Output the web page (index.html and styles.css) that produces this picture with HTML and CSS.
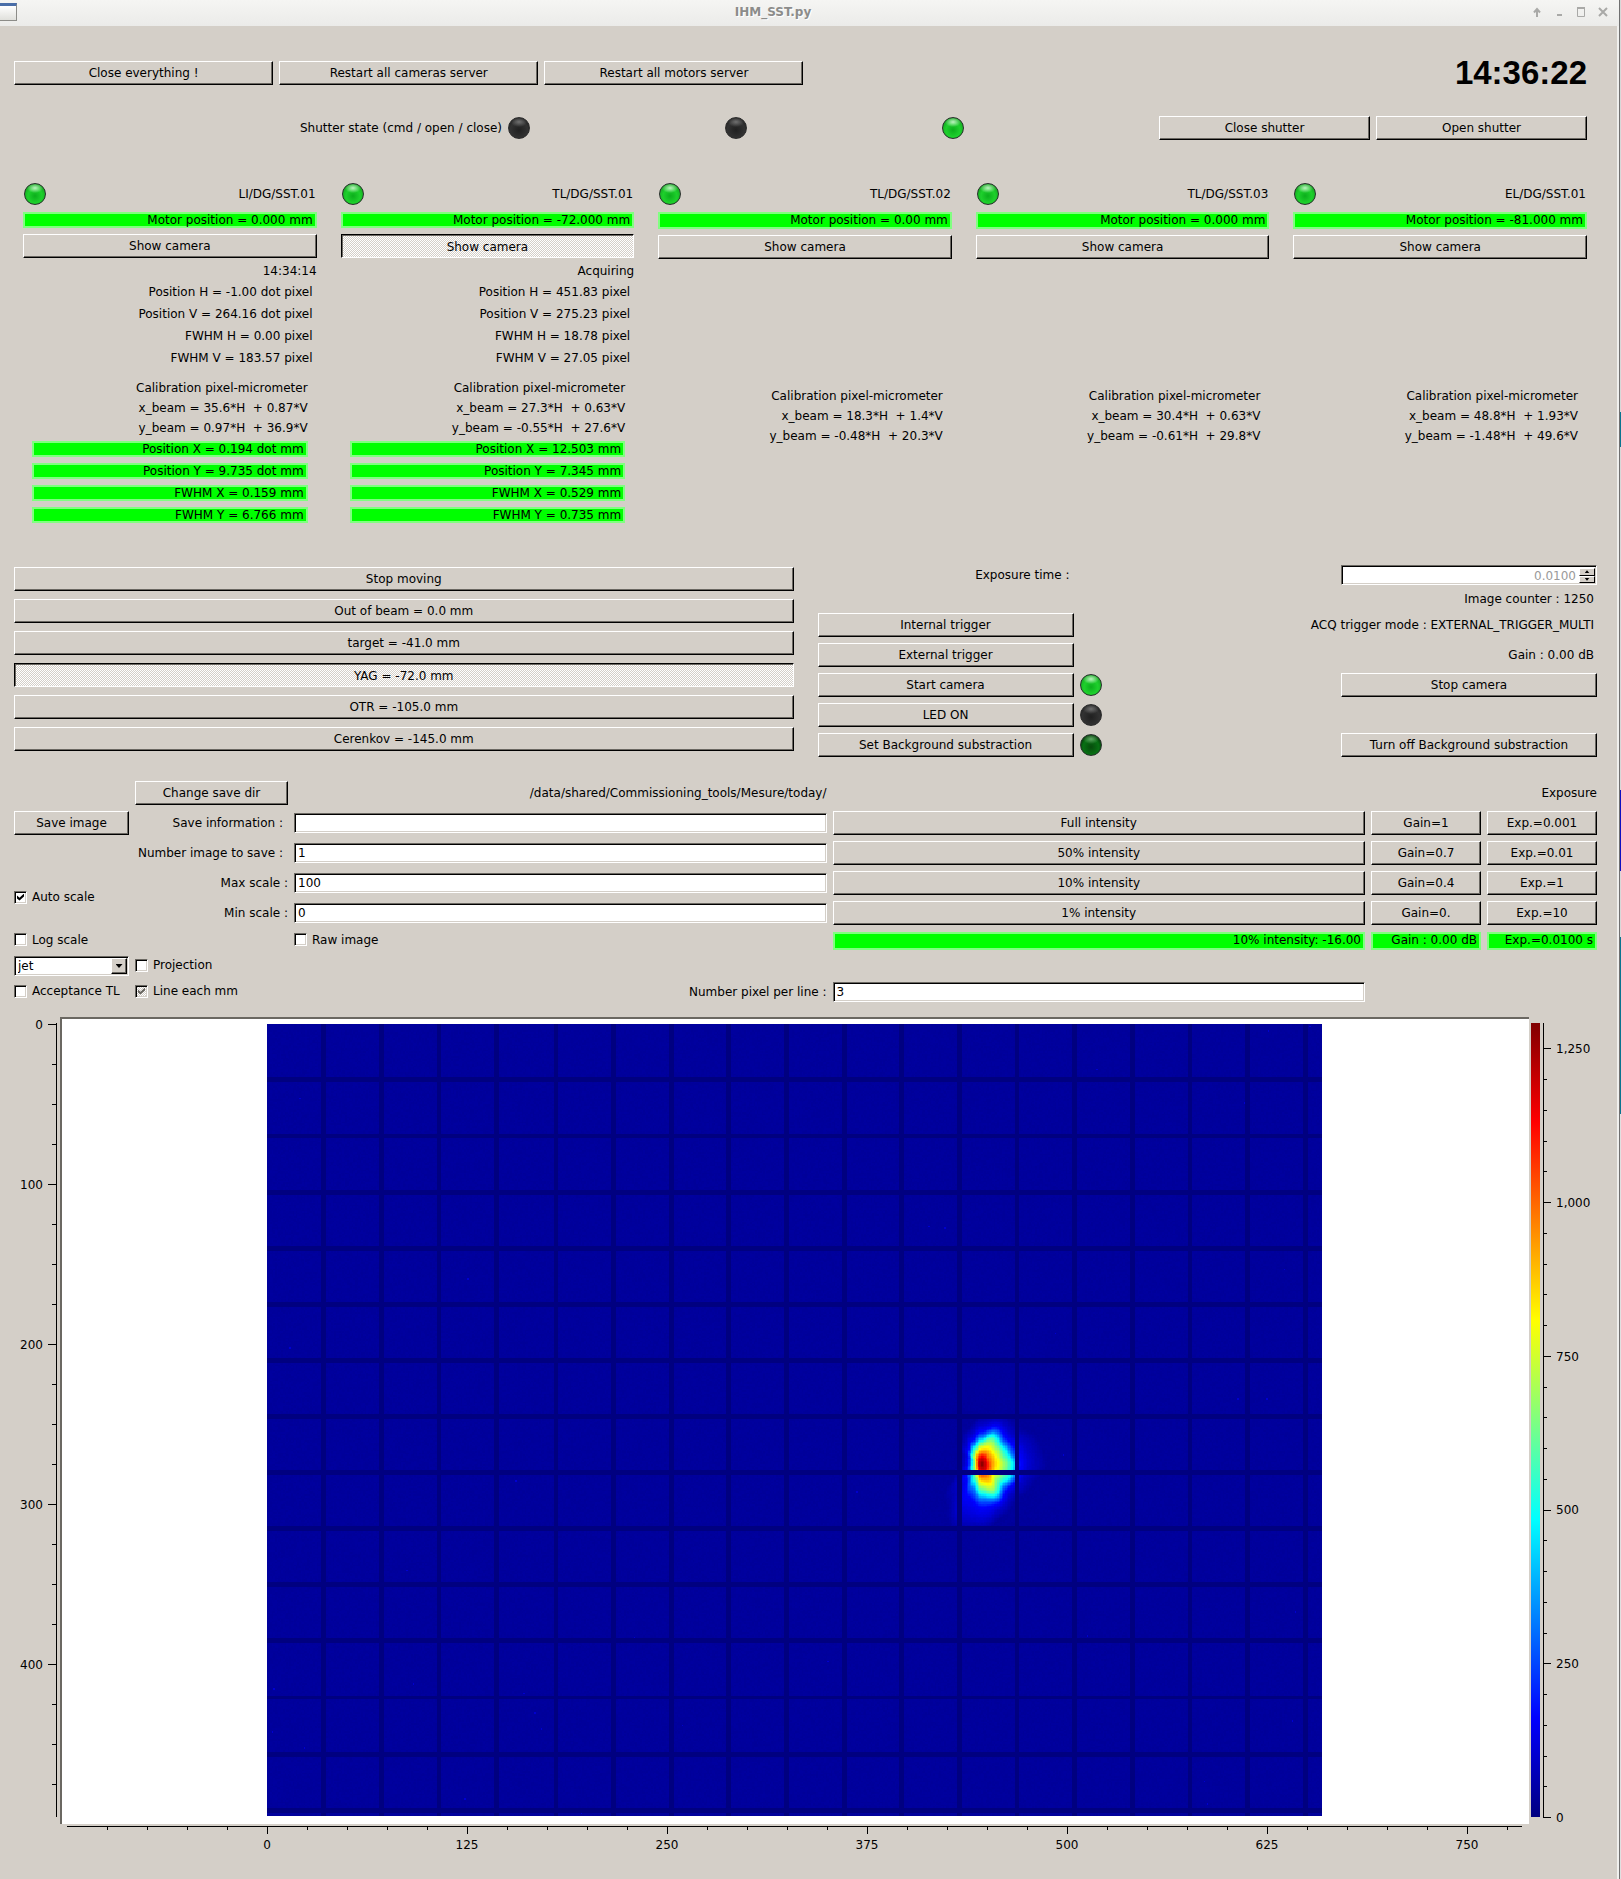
FILE: index.html
```html
<!DOCTYPE html>
<html lang="en">
<head>
<meta charset="utf-8">
<title>IHM_SST.py</title>
<link rel="stylesheet" href="styles.css">
</head>
<body>
<div class="window">
  <header class="titlebar">
    <span class="app-icon"></span>
    <h1 class="title">IHM_SST.py</h1>
    <div class="window-buttons">
      <button type="button" aria-label="Shade"><svg width="10" height="10" viewBox="0 0 10 10"><path d="M5 10V3M2 5.500L5 2l3 3.500" /></svg></button>
      <button type="button" aria-label="Minimize"><svg width="10" height="10" viewBox="0 0 10 10"><path d="M3 8h5" /></svg></button>
      <button type="button" aria-label="Maximize"><svg width="10" height="10" viewBox="0 0 10 10"><path class="thin" d="M1.500 1v8.500h7V1" /><path d="M1 1h8" /></svg></button>
      <button type="button" aria-label="Close"><svg width="10" height="10" viewBox="0 0 10 10"><path d="M1 1l8 8M9 1l-8 8" /></svg></button>
    </div>
  </header>

  <main>
    <section class="toolbar">
      <button type="button" class="btn">Close everything !</button>
      <button type="button" class="btn">Restart all cameras server</button>
      <button type="button" class="btn">Restart all motors server</button>
      <time class="clock">14:36:22</time>
    </section>

    <section class="shutter">
      <span class="right">Shutter state (cmd / open / close)</span>
      <span class="led off"></span>
      <span class="led off"></span>
      <span class="led on"></span>
      <button type="button" class="btn">Close shutter</button>
      <button type="button" class="btn">Open shutter</button>
    </section>

    <section class="stations">
      <article class="station">
        <div class="station-head"><span class="led on"></span><span>LI/DG/SST.01</span></div>
        <div class="bar">Motor position = 0.000 mm</div>
        <button type="button" class="btn">Show camera</button>
        <div class="status">14:34:14</div>
        <div class="readings">
          <div>Position H = -1.00 dot pixel</div>
          <div>Position V = 264.16 dot pixel</div>
          <div>FWHM H = 0.00 pixel</div>
          <div>FWHM V = 183.57 pixel</div>
        </div>
        <div class="calibration">Calibration pixel-micrometer
x_beam = 35.6*H  + 0.87*V
y_beam = 0.97*H  + 36.9*V</div>
        <div class="results">
          <div class="bar">Position X = 0.194 dot mm</div>
          <div class="bar">Position Y = 9.735 dot mm</div>
          <div class="bar">FWHM X = 0.159 mm</div>
          <div class="bar">FWHM Y = 6.766 mm</div>
        </div>
      </article>
      <article class="station">
        <div class="station-head"><span class="led on"></span><span>TL/DG/SST.01</span></div>
        <div class="bar">Motor position = -72.000 mm</div>
        <button type="button" class="btn pressed" aria-pressed="true">Show camera</button>
        <div class="status">Acquiring</div>
        <div class="readings">
          <div>Position H = 451.83 pixel</div>
          <div>Position V = 275.23 pixel</div>
          <div>FWHM H = 18.78 pixel</div>
          <div>FWHM V = 27.05 pixel</div>
        </div>
        <div class="calibration">Calibration pixel-micrometer
x_beam = 27.3*H  + 0.63*V
y_beam = -0.55*H  + 27.6*V</div>
        <div class="results">
          <div class="bar">Position X = 12.503 mm</div>
          <div class="bar">Position Y = 7.345 mm</div>
          <div class="bar">FWHM X = 0.529 mm</div>
          <div class="bar">FWHM Y = 0.735 mm</div>
        </div>
      </article>
      <article class="station idle">
        <div class="station-head"><span class="led on"></span><span>TL/DG/SST.02</span></div>
        <div class="bar">Motor position = 0.00 mm</div>
        <button type="button" class="btn">Show camera</button>
        <div class="calibration">Calibration pixel-micrometer
x_beam = 18.3*H  + 1.4*V
y_beam = -0.48*H  + 20.3*V</div>
      </article>
      <article class="station idle">
        <div class="station-head"><span class="led on"></span><span>TL/DG/SST.03</span></div>
        <div class="bar">Motor position = 0.000 mm</div>
        <button type="button" class="btn">Show camera</button>
        <div class="calibration">Calibration pixel-micrometer
x_beam = 30.4*H  + 0.63*V
y_beam = -0.61*H  + 29.8*V</div>
      </article>
      <article class="station idle">
        <div class="station-head"><span class="led on"></span><span>EL/DG/SST.01</span></div>
        <div class="bar">Motor position = -81.000 mm</div>
        <button type="button" class="btn">Show camera</button>
        <div class="calibration">Calibration pixel-micrometer
x_beam = 48.8*H  + 1.93*V
y_beam = -1.48*H  + 49.6*V</div>
      </article>
    </section>

    <section class="controls">
      <div class="motor">
        <button type="button" class="btn">Stop moving</button>
        <button type="button" class="btn">Out of beam = 0.0 mm</button>
        <button type="button" class="btn">target = -41.0 mm</button>
        <button type="button" class="btn pressed" aria-pressed="true">YAG = -72.0 mm</button>
        <button type="button" class="btn">OTR = -105.0 mm</button>
        <button type="button" class="btn">Cerenkov = -145.0 mm</button>
      </div>
      <div class="camera">
        <label class="exposure-label" for="exposure">Exposure time :</label>
        <div class="spin field">
          <input id="exposure" type="text" value="0.0100" disabled>
          <div class="spin-buttons">
            <button type="button" class="up" aria-label="Increase"></button>
            <button type="button" class="down" aria-label="Decrease"></button>
          </div>
        </div>
        <div class="info">Image counter : 1250</div>
        <button type="button" class="btn">Internal trigger</button>
        <div class="info">ACQ trigger mode : EXTERNAL_TRIGGER_MULTI</div>
        <button type="button" class="btn">External trigger</button>
        <div class="info">Gain : 0.00 dB</div>
        <button type="button" class="btn">Start camera</button>
        <span class="led on"></span>
        <button type="button" class="btn last">Stop camera</button>
        <button type="button" class="btn first">LED ON</button>
        <span class="led off"></span>
        <button type="button" class="btn first">Set Background substraction</button>
        <span class="led dim"></span>
        <button type="button" class="btn last">Turn off Background substraction</button>
      </div>
    </section>

    <form class="settings">
      <button type="button" class="btn r1 c2">Change save dir</button>
      <span class="right r1 c3">/data/shared/Commissioning_tools/Mesure/today/</span>
      <span class="right r1 c6">Exposure</span>

      <button type="button" class="btn r2 c1">Save image</button>
      <label class="right inset r2 c2" for="info">Save information :</label>
      <input class="field r2 c3" id="info" type="text" value="">
      <button type="button" class="btn r2 c4">Full intensity</button>
      <button type="button" class="btn r2 c5">Gain=1</button>
      <button type="button" class="btn r2 c6">Exp.=0.001</button>

      <label class="right inset r3 c2" for="count">Number image to save :</label>
      <input class="field r3 c3" id="count" type="text" value="1">
      <button type="button" class="btn r3 c4">50% intensity</button>
      <button type="button" class="btn r3 c5">Gain=0.7</button>
      <button type="button" class="btn r3 c6">Exp.=0.01</button>

      <label class="right r4 c2" for="max">Max scale :</label>
      <input class="field r4 c3" id="max" type="text" value="100">
      <button type="button" class="btn r4 c4">10% intensity</button>
      <button type="button" class="btn r4 c5">Gain=0.4</button>
      <button type="button" class="btn r4 c6">Exp.=1</button>

      <label class="check auto c1"><input type="checkbox" checked>Auto scale</label>
      <label class="right r5 c2" for="min">Min scale :</label>
      <input class="field r5 c3" id="min" type="text" value="0">
      <button type="button" class="btn r5 c4">1% intensity</button>
      <button type="button" class="btn r5 c5">Gain=0.</button>
      <button type="button" class="btn r5 c6">Exp.=10</button>

      <label class="check r6 c1"><input type="checkbox">Log scale</label>
      <label class="check r6 c3"><input type="checkbox">Raw image</label>
      <div class="bar r6 c4">10% intensity: -16.00</div>
      <div class="bar r6 c5">Gain : 0.00 dB</div>
      <div class="bar r6 c6">Exp.=0.0100 s</div>

      <div class="combo field r7 c1"><select aria-label="Colour map"><option>jet</option></select><span class="combo-arrow"></span></div>
      <label class="check r7 c2"><input type="checkbox">Projection</label>

      <label class="check r8 c1"><input type="checkbox">Acceptance TL</label>
      <label class="check r8 c2"><input class="partial" type="checkbox" checked>Line each mm</label>
      <label class="right r8 c3" for="pixels">Number pixel per line :</label>
      <input class="field r8 c4" id="pixels" type="text" value="3">
    </form>

    <section class="plot">
      <svg class="y-axis" width="60" height="807" viewBox="0 0 60 807">
        <path d="M56.500 6V800" />
        <path d="M54 7V800" stroke-width="4" stroke-dasharray="1 39" />
        <path d="M52 7V800" stroke-width="8" stroke-dasharray="1 159" />
        <g text-anchor="end">
          <text x="43" y="12">0</text><text x="43" y="172">100</text><text x="43" y="332">200</text><text x="43" y="492">300</text><text x="43" y="652">400</text>
        </g>
      </svg>
      <div class="frame"><canvas id="beam" width="659" height="495"></canvas></div>
      <div class="colorbar"></div>
      <svg class="z-axis" width="60" height="807" viewBox="0 0 60 807">
        <path d="M2.500 6V801" />
        <path d="M4 801V6" stroke-width="4" stroke-dasharray="1 29.750" />
        <path d="M6 801V6" stroke-width="8" stroke-dasharray="1 152.750" />
        <g>
          <text x="15" y="36">1,250</text><text x="15" y="190">1,000</text><text x="15" y="344">750</text><text x="15" y="497">500</text><text x="15" y="651">250</text><text x="15" y="805">0</text>
        </g>
      </svg>
      <div class="x-axis">
        <svg width="1455" height="40" viewBox="0 0 1455 40">
          <path d="M0 2.500H1455" />
          <path d="M40 4H1455" stroke-width="4" stroke-dasharray="1 39" />
          <path d="M200 6H1455" stroke-width="8" stroke-dasharray="1 199" />
          <g text-anchor="middle">
            <text x="200" y="25">0</text><text x="400" y="25">125</text><text x="600" y="25">250</text><text x="800" y="25">375</text><text x="1000" y="25">500</text><text x="1200" y="25">625</text><text x="1400" y="25">750</text>
          </g>
        </svg>
      </div>
    </section>
  </main>
</div>
<script src="beam.js"></script>
</body>
</html>
```
FILE: styles.css
```css
* { box-sizing: border-box; }

body {
  margin: 0;
  min-height: 100vh;
  padding-right: 1px;
  background: linear-gradient(#d8d8d8 0 412px, #0a7590 412px 447px, #d8d8d8 447px 790px, #1010c0 790px 871px, #d8d8d8 871px 937px, #0a7590 937px 1114px, #e0e0e0 1114px);
  font: 12px/16px "DejaVu Sans", sans-serif;
  color: #000;
}

.window {
  min-height: 100vh;
  background: #d4cfc8;
  border-right: 1px solid #707070;
  box-shadow: inset -2px 0 #f0f0ee;
}

button, input, select { font: inherit; color: inherit; margin: 0; }

/* title bar */
.titlebar {
  display: grid;
  grid-template-columns: 1fr auto 1fr;
  align-items: center;
  height: 26px;
  padding: 0 11px 2px 0;
  background: linear-gradient(#f5f5f3, #ebebe9);
}
.app-icon {
  width: 17px;
  height: 18px;
  background: linear-gradient(#fff, #e0e0dc);
  border: 1px solid #8c8c88;
  border-left: 0;
  border-top: 3px solid #4a6ea8;
}
.title {
  margin: 0;
  padding-right: 62px;
  font-size: 12px;
  color: #8c8c8a;
  text-shadow: 1px 1px #fff;
}
.window-buttons { display: flex; justify-content: flex-end; gap: 12px; }
.window-buttons button {
  display: flex;
  padding: 0;
  border: 0;
  background: none;
}
.window-buttons path { fill: none; stroke: #a9a9a7; stroke-width: 2; }
.window-buttons .thin { stroke-width: 1; }

main { padding: 35px 22px 0 14px; }

/* shared controls */
.btn {
  height: 24px;
  padding: 0 4px;
  background: #d4cfc8;
  border: 1px solid;
  border-color: #fff #000 #000 #fff;
  box-shadow: inset -1px -1px #6b6862;
  line-height: 20px;
  white-space: nowrap;
}
.btn.pressed {
  padding-top: 2px;
  background: repeating-conic-gradient(#fff 0 25%, #d4cfc8 0 50%) 0 0 / 2px 2px;
  border-color: #000 #fff #fff #000;
  box-shadow: inset 1px 1px #6b6862;
}
.right { text-align: right; white-space: nowrap; }
.inset { padding-right: 5px; }
.bar {
  height: 16px;
  padding-right: 2px;
  background: #0f0;
  border: 2px solid #80ff80;
  line-height: 12px;
  text-align: right;
  white-space: nowrap;
}
.field {
  width: 100%;
  min-width: 0;
  height: 20px;
  padding: 1px 3px;
  background: #fff;
  border: 1px solid;
  border-color: #6b6862 #fff #fff #6b6862;
  border-radius: 0;
  box-shadow: inset 1px 1px #000, inset -1px -1px #d4cfc8;
}
.led {
  width: 22px;
  height: 22px;
  border-radius: 50%;
  border: 1px solid #26302a;
  background:
    radial-gradient(ellipse 8px 5px at 50% 20%, #f0fff0c0, #ffffff00),
    radial-gradient(circle at 50% 60%, #0cae1c 0, #1ed02c 45%, #17a823 75%, #0a4a10 100%);
}
.led.dim {
  background:
    radial-gradient(ellipse 8px 5px at 50% 20%, #a0d0a090, #ffffff00),
    radial-gradient(circle at 50% 60%, #064c0c 0, #087014 50%, #043408 80%, #021c04 100%);
}
.led.off {
  border-color: #2c2c2c;
  background:
    radial-gradient(ellipse 8px 5px at 50% 20%, #a0a0a090, #ffffff00),
    radial-gradient(circle at 50% 60%, #202020 0, #323232 55%, #161616 100%);
}

/* top rows */
.toolbar {
  display: grid;
  grid-template-columns: 1fr 1fr 1fr 3fr;
  gap: 6px;
  padding-right: 10px;
}
.clock {
  font: bold 33px/24px "Liberation Sans", sans-serif;
  text-align: right;
}
.shutter {
  display: grid;
  grid-template-columns: 488px repeat(5, 1fr);
  gap: 6px;
  align-items: center;
  margin-top: 31px;
  padding-right: 10px;
}

/* stations */
.stations {
  display: grid;
  grid-template-columns: repeat(5, 1fr);
  gap: 24px;
  margin-top: 43px;
  padding: 0 10px 0 9px;
}
.station { display: flex; flex-direction: column; }
.station-head {
  display: flex;
  justify-content: space-between;
  align-items: center;
  margin-bottom: 7px;
  padding: 0 1px;
}
.station > .btn { margin-top: 6px; }
.status { margin-top: 4px; line-height: 19px; text-align: right; }
.readings { padding-right: 4px; line-height: 22px; text-align: right; }
.calibration {
  margin-top: 9px;
  padding-right: 9px;
  line-height: 20px;
  text-align: right;
  white-space: pre;
}
.results {
  display: flex;
  flex-direction: column;
  gap: 6px;
  margin: 3px 9px 0;
}
.idle > .bar { height: 17px; }
.idle .calibration { margin-top: 127px; }

/* motor and camera controls */
.controls {
  display: grid;
  grid-template-columns: 1fr 1fr;
  gap: 24px;
  margin-top: 42px;
}
.motor { display: flex; flex-direction: column; gap: 8px; padding-top: 2px; }
.camera {
  display: grid;
  grid-template-columns: 256px 22px 1fr 256px;
  grid-template-rows: 20px 16px repeat(5, 24px);
  gap: 6px;
  align-items: center;
}
.exposure-label { padding-right: 4px; text-align: right; }
.spin { grid-column: 4; display: flex; padding: 2px 1px 1px 2px; }
.spin input {
  flex: 1;
  min-width: 0;
  padding: 0 3px;
  border: 0;
  background: none;
  color: #9a9a9a;
  text-align: right;
}
.spin-buttons { display: flex; flex-direction: column; }
.spin-buttons button {
  display: grid;
  place-items: center;
  width: 16px;
  height: 8px;
  padding: 0;
  background: #d4cfc8;
  border: 1px solid;
  border-color: #fff #000 #000 #fff;
}
.spin-buttons button::before { content: ""; width: 5px; height: 3px; background: #000; }
.up::before { clip-path: polygon(50% 0, 100% 100%, 0 100%); }
.down::before { clip-path: polygon(0 0, 100% 0, 50% 100%); }
.info {
  grid-column: 3 / 5;
  padding-right: 3px;
  text-align: right;
}
.camera .first { grid-column: 1; }
.camera .last { grid-column: 4; }

/* settings form */
.settings {
  display: grid;
  grid-template-columns: 115px 153px 1fr 1fr 110px 110px;
  grid-template-rows: repeat(5, 24px) 19px 20px 20px;
  gap: 6px;
  align-items: center;
  margin-top: 24px;
}
.c1 { grid-column: 1; }
.c2 { grid-column: 2; }
.c3 { grid-column: 3; }
.c4 { grid-column: 4; }
.c5 { grid-column: 5; }
.c6 { grid-column: 6; }
.r1 { grid-row: 1; }
.r2 { grid-row: 2; }
.r3 { grid-row: 3; }
.r4 { grid-row: 4; }
.r5 { grid-row: 5; }
.r6 { grid-row: 6; }
.r7 { grid-row: 7; }
.r8 { grid-row: 8; }
.auto { grid-row: 4 / 6; }
.settings .bar { height: 18px; }

.check {
  display: flex;
  align-items: center;
  gap: 5px;
  padding-bottom: 2px;
  white-space: nowrap;
}
.check input {
  display: grid;
  place-items: center;
  appearance: none;
  width: 13px;
  height: 13px;
  background: #fff;
  border: 1px solid;
  border-color: #6b6862 #fff #fff #6b6862;
  box-shadow: inset 1px 1px #000, inset -1px -1px #d4cfc8;
}
.check input:checked::before {
  content: "";
  width: 7px;
  height: 7px;
  background: #000;
  clip-path: polygon(0 29%, 36% 62%, 100% 0, 100% 42%, 36% 100%, 0 71%);
}
.check .partial { background: repeating-conic-gradient(#fff 0 25%, #d4cfc8 0 50%) 0 0 / 2px 2px; }
.check .partial:checked::before { background: #6b6862; }

.combo { display: flex; padding: 1px; }
.combo select {
  flex: 1;
  min-width: 0;
  appearance: none;
  padding: 0 2px;
  background: none;
  border: 0;
}
.combo-arrow {
  display: grid;
  place-items: center;
  width: 16px;
  background: #d4cfc8;
  border: 1px solid;
  border-color: #fff #000 #000 #fff;
  box-shadow: inset -1px -1px #6b6862;
}
.combo-arrow::before {
  content: "";
  width: 7px;
  height: 4px;
  background: #000;
  clip-path: polygon(0 0, 100% 0, 50% 100%);
}

/* image plot */
.plot {
  display: grid;
  grid-template-columns: 46px 1fr 9px 60px;
  margin: 15px -3px 0 0;
}
.plot svg { display: block; font-size: 12px; overflow: visible; }
.plot path { fill: none; stroke: #000; shape-rendering: crispEdges; }
.y-axis { justify-self: end; }
.frame {
  display: flex;
  justify-content: center;
  align-items: flex-start;
  margin-right: 2px;
  padding: 5px 3px 8px 0;
  background: #fff;
  border-top: 2px solid #6b6862;
  border-left: 2px solid #6b6862;
}
#beam { width: 1055px; height: 792px; image-rendering: pixelated; }
.colorbar {
  height: 794px;
  margin-top: 6px;
  background: linear-gradient(#800000, #f00 12.5%, #ff0 37.5%, #0ff 62.5%, #00f 87.5%, #000080);
}
.z-axis { margin-left: 1px; }
.x-axis {
  grid-column: 2;
  display: flex;
  justify-content: center;
  padding: 0 5px 0 2px;
}
.x-axis svg { flex: none; }
```
FILE: beam.js
```js
// Renders the camera frame with the jet colour map.
const canvas = document.getElementById("beam");
const ctx = canvas.getContext("2d");
const W = canvas.width, H = canvas.height;
const frame = ctx.createImageData(W, H);

// Beam profile: radius of each intensity level, every 22.5 degrees clockwise from the right.
const UNIT = 4.8, CX = 446, CY = 274.5;
const levels = [
  [1.0, [0, 0, 0, 0, 0, 0, 0, 0, 0, 0, 0, 0, 0, 0, 0, 0]],
  [0.9, [14, 15, 18, 20, 20, 16, 12, 10, 10, 10, 12, 16, 20, 18, 15, 14]],
  [0.75, [26, 28, 30, 38, 38, 26, 18, 15, 14, 15, 20, 27, 34, 34, 28, 26]],
  [0.63, [46, 44, 46, 62, 54, 34, 23, 20, 18, 19, 27, 36, 46, 50, 46, 46]],
  [0.5, [70, 66, 64, 86, 72, 44, 29, 25, 22, 24, 34, 45, 58, 74, 66, 62]],
  [0.36, [92, 92, 82, 102, 90, 58, 39, 32, 28, 30, 42, 55, 70, 92, 80, 82]],
  [0.22, [104, 104, 95, 114, 106, 76, 50, 38, 33, 35, 48, 64, 82, 104, 92, 94]],
  [0.1, [116, 114, 108, 128, 130, 105, 66, 48, 42, 44, 58, 76, 98, 120, 106, 110]],
  [0.045, [145, 130, 125, 145, 172, 172, 95, 62, 52, 54, 72, 92, 118, 138, 125, 140]],
  [0.0, [195, 165, 150, 170, 200, 215, 155, 90, 68, 70, 90, 115, 145, 165, 160, 185]]
];

function beam(x, y) {
  const dx = x - CX, dy = y - CY;
  const r = Math.hypot(dx, dy) * UNIT;
  if (r > 240) return 0;
  const a = ((Math.atan2(dy, dx) / Math.PI * 8) + 16) % 16;
  const i = Math.floor(a) % 16, f = a - Math.floor(a);
  const ease = f * f * (3 - 2 * f);
  let prev = 0;
  for (let k = 1; k < levels.length; k++) {
    const t = levels[k][1];
    const edge = t[i] * (1 - ease) + t[(i + 1) % 16] * ease;
    if (r < edge) {
      const s = (r - prev) / (edge - prev);
      return levels[k - 1][0] * (1 - s) + levels[k][0] * s;
    }
    prev = edge;
  }
  return 0;
}

const clamp = v => Math.max(0, Math.min(1, v));
let seed = 7;
const random = () => (seed = (seed * 16807) % 2147483647) / 2147483647;

// The millimetre grid is drawn three pixels wide.
const near = (v, first, step) => {
  const d = v + 0.5 - first;
  return Math.abs(d - Math.round(d / step) * step) < 1.5 && d > -2;
};

for (let y = 0; y < H; y++) {
  for (let x = 0; x < W; x++) {
    let v = 0.025 + random() * 0.006 + beam(x, y) * 0.97;
    if (random() < 0.00012) v += 0.05;
    if (near(x, 35.8, 36.06) || near(y, 34.9, 35.1)) v = 0;
    const p = (y * W + x) * 4;
    frame.data[p] = 255 * clamp(1.5 - Math.abs(4 * v - 3));
    frame.data[p + 1] = 255 * clamp(1.5 - Math.abs(4 * v - 2));
    frame.data[p + 2] = 255 * clamp(1.5 - Math.abs(4 * v - 1));
    frame.data[p + 3] = 255;
  }
}
ctx.putImageData(frame, 0, 0);
```
